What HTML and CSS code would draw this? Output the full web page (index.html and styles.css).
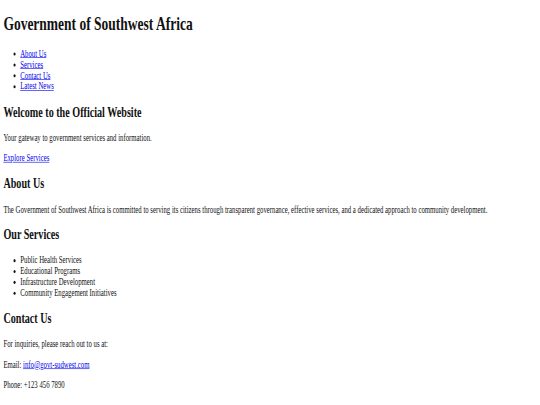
FILE: index.html
```html
<!DOCTYPE html>
<html lang="en">
<head>
  <meta charset="UTF-8">
  <meta name="viewport" content="width=device-width, initial-scale=1.0">
  <title>Government of Southwest Africa</title>
  <link rel="stylesheet" href="styles.css">
</head>
<body>
  <div class="page">
    <header>
      <h1>Government of Southwest Africa</h1>
      <nav>
        <ul>
          <li><a href="#about">About Us</a></li>
          <li><a href="#services">Services</a></li>
          <li><a href="#contact">Contact Us</a></li>
          <li><a href="#news">Latest News</a></li>
        </ul>
      </nav>
    </header>

    <section class="hero">
      <h2>Welcome to the Official Website</h2>
      <p>Your gateway to government services and information.</p>
      <a href="#services">Explore Services</a>
    </section>

    <section id="about">
      <h2>About Us</h2>
      <p>The Government of Southwest Africa is committed to serving its citizens through transparent governance, effective services, and a dedicated approach to community development.</p>
    </section>

    <section id="services">
      <h2>Our Services</h2>
      <ul>
        <li>Public Health Services</li>
        <li>Educational Programs</li>
        <li>Infrastructure Development</li>
        <li>Community Engagement Initiatives</li>
      </ul>
    </section>

    <section id="contact">
      <h2>Contact Us</h2>
      <p>For inquiries, please reach out to us at:</p>
      <p>Email: <a href="mailto:info@govt-sudwest.com">info@govt-sudwest.com</a></p>
      <p>Phone: +123 456 7890</p>
      <p class="hotline">Emergency: 112</p>
    </section>
  </div>
</body>
</html>
```

FILE: styles.css
```css
html, body {
  margin: 0;
  overflow: hidden;
}

/* the page was laid out for a wider window and squeezed into this one */
.page {
  width: 1280px;
  padding: 0 8px;
  box-sizing: border-box;
  font-family: "Liberation Serif", "Times New Roman", serif;
  font-size: 16px;
  color: #111;
  transform: scale(0.421875, 0.604);
  transform-origin: 0 0;
}

.page::before,
.page::after {
  content: "";
  display: table;
}

.hero a {
  display: inline-block;
}

a {
  color: #0000ee;
}

.hotline {
  margin-top: 22px;
}
```
